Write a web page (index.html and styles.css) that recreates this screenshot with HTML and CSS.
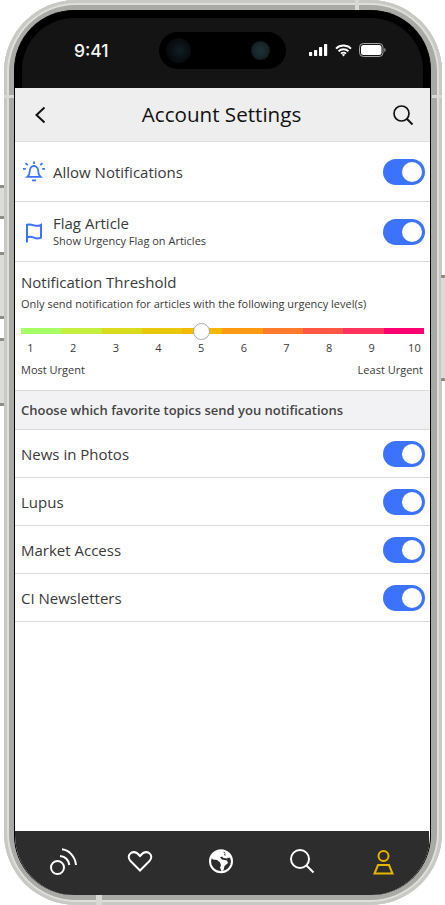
FILE: index.html
```html
<!DOCTYPE html>
<html lang="en">
<head>
<meta charset="utf-8">
<title>Account Settings</title>
<link rel="stylesheet" href="styles.css">
</head>
<body>
<div class="phone">
  <span class="side left k1"></span><span class="side left k2"></span><span class="side left k3"></span><span class="side right k4"></span>
  <span class="band b1"></span><span class="band b2"></span><span class="band b3"></span><span class="band b4"></span>
  <div class="screen">
    <div class="status">
      <span class="time">9:41</span>
      <div class="island"><span class="lens lens-l"></span><span class="lens lens-r"></span></div>
      <div class="status-icons">
        <svg width="19" height="12" viewBox="0 0 19 12"><rect x="0" y="8" width="3.2" height="4" rx=".7"/><rect x="5" y="6" width="3.2" height="6" rx=".7"/><rect x="10" y="3" width="3.2" height="9" rx=".7"/><rect x="15" y="0" width="3.2" height="12" rx=".7"/></svg>
        <svg class="wifi" width="17" height="13" viewBox="0 0 17 13"><path d="M1 4.6a10.800 10.800 0 0 1 15 0M3.500 7.200a7.200 7.200 0 0 1 10 0M6 9.700a3.500 3.500 0 0 1 5 0" fill="none" stroke="#fff" stroke-width="1.900"/><path d="M6.900 10.800 8.500 12.600l1.600-1.800a2.300 2.300 0 0 0-3.200 0z"/></svg>
        <svg class="batt" width="27" height="14" viewBox="0 0 27 14"><rect x=".5" y=".5" width="23.500" height="13" rx="3.800" fill="none" stroke="#a5a5a5"/><rect x="2" y="2" width="20.500" height="10" rx="2.500"/><path d="M25.200 5v4c.9-.3 1.500-1.100 1.500-2s-.6-1.700-1.500-2z" fill="#8a8a8a"/></svg>
      </div>
    </div>
    <div class="app">
      <header class="topbar">
        <svg class="tb-icon" width="24" height="24" viewBox="0 0 24 24"><path d="M16.500 4.500 8.500 12l8 7.500" fill="none" stroke="#111" stroke-width="2"/></svg>
        <h1>Account Settings</h1>
        <svg class="tb-icon" width="24" height="24" viewBox="0 0 24 24"><circle cx="10.500" cy="10.500" r="7.500" fill="none" stroke="#111" stroke-width="1.700"/><path d="m16 16 5.500 5.500" stroke="#111" stroke-width="2" fill="none"/></svg>
      </header>

      <div class="row row-tall">
        <svg class="row-icon" width="24" height="22" viewBox="0 0 24 22" fill="none" stroke="#3b73ff" stroke-width="1.800"><path d="M4.500 15.800c1.600-1.300 2.200-2.800 2.200-5.300 0-3.400 1.900-5.500 4.300-5.500s4.300 2.100 4.300 5.500c0 2.500.6 4 2.200 5.300z"/><path d="M9 19.300h4M0 7.800h2.800M19.200 7.800H22M2.500 2.300l2.300 1.800M19.500 2.300l-2.300 1.800M11 .5v2.500"/></svg>
        <span class="row-label">Allow Notifications</span>
        <span class="toggle"></span>
      </div>
      <div class="row row-tall">
        <svg class="row-icon" width="24" height="22" viewBox="0 0 24 22" fill="none" stroke="#3b73ff" stroke-width="2"><path d="M4 21.500V3.800c2.300-.6 4.700-.1 7 .6s4.700.7 7-.6v12.800c-2.300 1.100-4.700 1.100-7 .1s-4.700-1.500-7-.3"/></svg>
        <div class="row-text">
          <span class="row-label">Flag Article</span>
          <span class="row-sub">Show Urgency Flag on Articles</span>
        </div>
        <span class="toggle"></span>
      </div>

      <section class="threshold">
        <h2>Notification Threshold</h2>
        <p>Only send notification for articles with the following urgency level(s)</p>
        <div class="slider">
          <i class="s1"></i><i class="s2"></i><i class="s3"></i><i class="s4"></i><i class="s5"></i><i class="s6"></i><i class="s7"></i><i class="s8"></i><i class="s9"></i><i class="s10"></i>
          <span class="thumb"></span>
        </div>
        <div class="scale">
          <span>1</span><span>2</span><span>3</span><span>4</span><span>5</span><span>6</span><span>7</span><span>8</span><span>9</span><span>10</span>
        </div>
        <div class="ends"><span>Most Urgent</span><span>Least Urgent</span></div>
      </section>

      <div class="section-head">Choose which favorite topics send you notifications</div>

      <div class="row topic"><span class="row-label">News in Photos</span><span class="toggle"></span></div>
      <div class="row topic"><span class="row-label">Lupus</span><span class="toggle"></span></div>
      <div class="row topic"><span class="row-label">Market Access</span><span class="toggle"></span></div>
      <div class="row topic"><span class="row-label">CI Newsletters</span><span class="toggle"></span></div>

      <div class="spacer"></div>

      <nav class="tabbar">
        <svg width="32" height="32" viewBox="0 0 32 32" fill="none" stroke="#fff" stroke-width="2"><circle cx="10.500" cy="20.500" r="6.500"/><path d="M13 9c5 .6 8.600 4 9.300 9M15 2.300c7.500 1.200 13 7 14 15.700"/></svg>
        <svg width="32" height="32" viewBox="0 0 32 32" fill="none" stroke="#fff" stroke-width="2"><path d="M13 23.500 3.500 14c-2.500-2.600-2.300-5.800.1-7.700 2.800-2 6.400-1 9.400 2.700 3-3.700 6.600-4.700 9.400-2.700 2.400 1.900 2.600 5.100.1 7.700z"/></svg>
        <svg width="32" height="32" viewBox="0 0 32 32"><circle cx="14" cy="14.300" r="11" fill="none" stroke="#fff" stroke-width="2"/><path fill="#fff" d="M12 4l-4 1.500-4 5 2 2 4 .5 3 2.500 1 3-1 2 1.500 4 2-1.500 1-4 3.500-3-1-2.500-5-1-2-2 2-1 1.500 1.500 4 .5-.5-2-3-1.500 1-2-2-1 1-1.500z"/><path fill="#fff" d="M18 4.500l4 3 1.500 3-3 .5-2-2z"/></svg>
        <svg width="32" height="32" viewBox="0 0 32 32" fill="none" stroke="#fff" stroke-width="2"><circle cx="13" cy="12" r="9"/><path d="m19.500 18.500 7 7"/></svg>
        <svg width="32" height="32" viewBox="0 0 32 32" fill="none" stroke="#e8b500" stroke-width="2"><circle cx="16.500" cy="9" r="5"/><path d="M11 18h11l3.500 8.500h-18z"/></svg>
      </nav>
    </div>
  </div>
</div>
</body>
</html>
```
FILE: styles.css
```css
* { box-sizing: border-box; }
html, body { margin: 0; padding: 0; background: #fff; width: 445px; height: 905px; overflow: hidden; }
body { font-family: "Open Sans", sans-serif; color: #333; position: relative; }

.phone {
  position: relative;
  margin-left: 4px;
  width: 438px;
  height: 905px;
  padding: 10px;
  border-radius: 72px;
  background: #a9a9a5;
  box-shadow: inset 0 0 0 3px #c8c8c4, inset 0 0 0 5px #dededa;
}
.side { position: absolute; width: 4px; background: #dcdcda; border-top: 3px solid #8e8e88; border-bottom: 3px solid #8e8e88; }
.left { left: -4px; }
.right { right: -3px; }
.k1 { top: 185px; height: 34px; }
.k2 { top: 252px; height: 67px; }
.k3 { top: 338px; height: 68px; }
.k4 { top: 275px; height: 106px; }
.band { position: absolute; background: #d8d8d4; }
.b1 { left: 0; top: 95px; width: 10px; height: 3px; }
.b2 { right: 0; top: 95px; width: 10px; height: 3px; }
.b3 { left: 351px; top: 0; width: 4px; height: 10px; }
.b4 { left: 92px; bottom: 0; width: 6px; height: 10px; }

.screen {
  position: relative;
  height: 885px;
  width: 417px;
  border-radius: 60px;
  background: #000;
  overflow: hidden;
  display: flex;
  flex-direction: column;
  border: 1px solid #000;
  border-bottom: 0;
}

.status {
  flex: 0 0 70px;
  margin: 7px 7px 0;
  background: #141414;
  border-radius: 52px 52px 0 0;
  position: relative;
}
.time {
  position: absolute;
  left: 52px;
  top: 21px;
  font: 500 17.500px/24px Inter, sans-serif;
  color: #f4f4f4;
}
.island {
  position: absolute;
  left: 137px;
  top: 14px;
  width: 127px;
  height: 37px;
  border-radius: 19px;
  background: #000;
}
.lens { position: absolute; border-radius: 50%; }
.lens-l { left: 7px; top: 6px; width: 25px; height: 25px; background: radial-gradient(circle at 55% 50%, #0f2026 0, #0b1218 35%, #070809 75%); }
.lens-r { left: 92px; top: 9px; width: 19px; height: 19px; background: radial-gradient(circle at 50% 50%, #1f3238 0, #18262a 50%, #0a0d0e 100%); }
.status-icons { position: absolute; left: 287px; top: 25px; display: flex; align-items: center; gap: 7px; }
.status-icons svg { fill: #fff; display: block; }

.app {
  flex: 1;
  display: flex;
  flex-direction: column;
  background: #fff;
  min-height: 0;
}
.topbar {
  flex: 0 0 54px;
  display: flex;
  align-items: center;
  justify-content: space-between;
  padding: 0 15px 0 13px;
  background: #eee;
  border-bottom: 1px solid #ddd;
}
.tb-icon { display: block; }
.topbar h1 { margin: 0; font-size: 20.600px; font-weight: 500; color: #111; line-height: 27px; }

.row {
  display: flex;
  align-items: center;
  border-bottom: 1px solid #d9d9d9;
  padding: 0 5px 0 6px;
}
.row-tall { height: 60px; padding-left: 8px; }
.row-icon { flex: none; margin-right: 6px; display: block; }
.topic { height: 48px; }
.row-text { display: flex; flex-direction: column; flex: 1; padding-bottom: 2px; }
.row-tall > .row-label { flex: 1; }
.topic > .row-label { flex: 1; }
.row-label { font-size: 15px; line-height: 20px; color: #3a3a3a; }
.row-sub { font-size: 11px; line-height: 15px; color: #3a3a3a; }
.toggle {
  flex: none;
  width: 42px;
  height: 26px;
  border-radius: 13px;
  background: #3b73ff;
  position: relative;
}
.toggle::after {
  content: "";
  position: absolute;
  right: 3px;
  top: 3px;
  width: 20px;
  height: 20px;
  border-radius: 50%;
  background: #fff;
}

.threshold { height: 129px; padding: 10px 6px 0 6px; border-bottom: 1px solid #d9d9d9; }
.threshold h2 { margin: 0; font-size: 15px; font-weight: 400; line-height: 20px; color: #3a3a3a; }
.threshold p { margin: 4px 0 0; font-size: 11px; line-height: 15px; color: #3a3a3a; }
.slider { position: relative; display: flex; height: 6px; margin-top: 17px; }
.slider i { flex: 1; }
.s1 { background: #a6ff66; } .s2 { background: #c4ef3e; } .s3 { background: #d8db1c; } .s4 { background: #e8c70c; }
.s5 { background: #f4b800; } .s6 { background: #ff9a14; } .s7 { background: #ff7a2c; } .s8 { background: #ff5646; }
.s9 { background: #ff335c; } .s10 { background: #ff0070; }
.thumb {
  position: absolute;
  left: 172px;
  top: -5px;
  width: 17px;
  height: 17px;
  border-radius: 50%;
  background: #fff;
  border: 1px solid #a8a8a8;
}
.scale { display: flex; justify-content: space-between; margin-top: 6px; }
.scale span { width: 19px; text-align: center; font-size: 11px; line-height: 15px; color: #3a3a3a; }
.ends { display: flex; justify-content: space-between; margin-top: 7px; padding-right: 1px; font-size: 11px; line-height: 15px; color: #3a3a3a; }

.section-head {
  height: 39px;
  display: flex;
  align-items: center;
  padding-left: 6px;
  background: #f2f2f4;
  border-bottom: 1px solid #d9d9d9;
  font-size: 13px;
  font-weight: 600;
  color: #444;
}
.spacer { flex: 1; }
.tabbar {
  flex: 0 0 64px;
  margin-right: 1px;
  background: #2d2d2d;
  display: flex;
  align-items: center;
  justify-content: space-between;
  padding: 0 30px 0 32px;
}
.tabbar svg { display: block; }
```
